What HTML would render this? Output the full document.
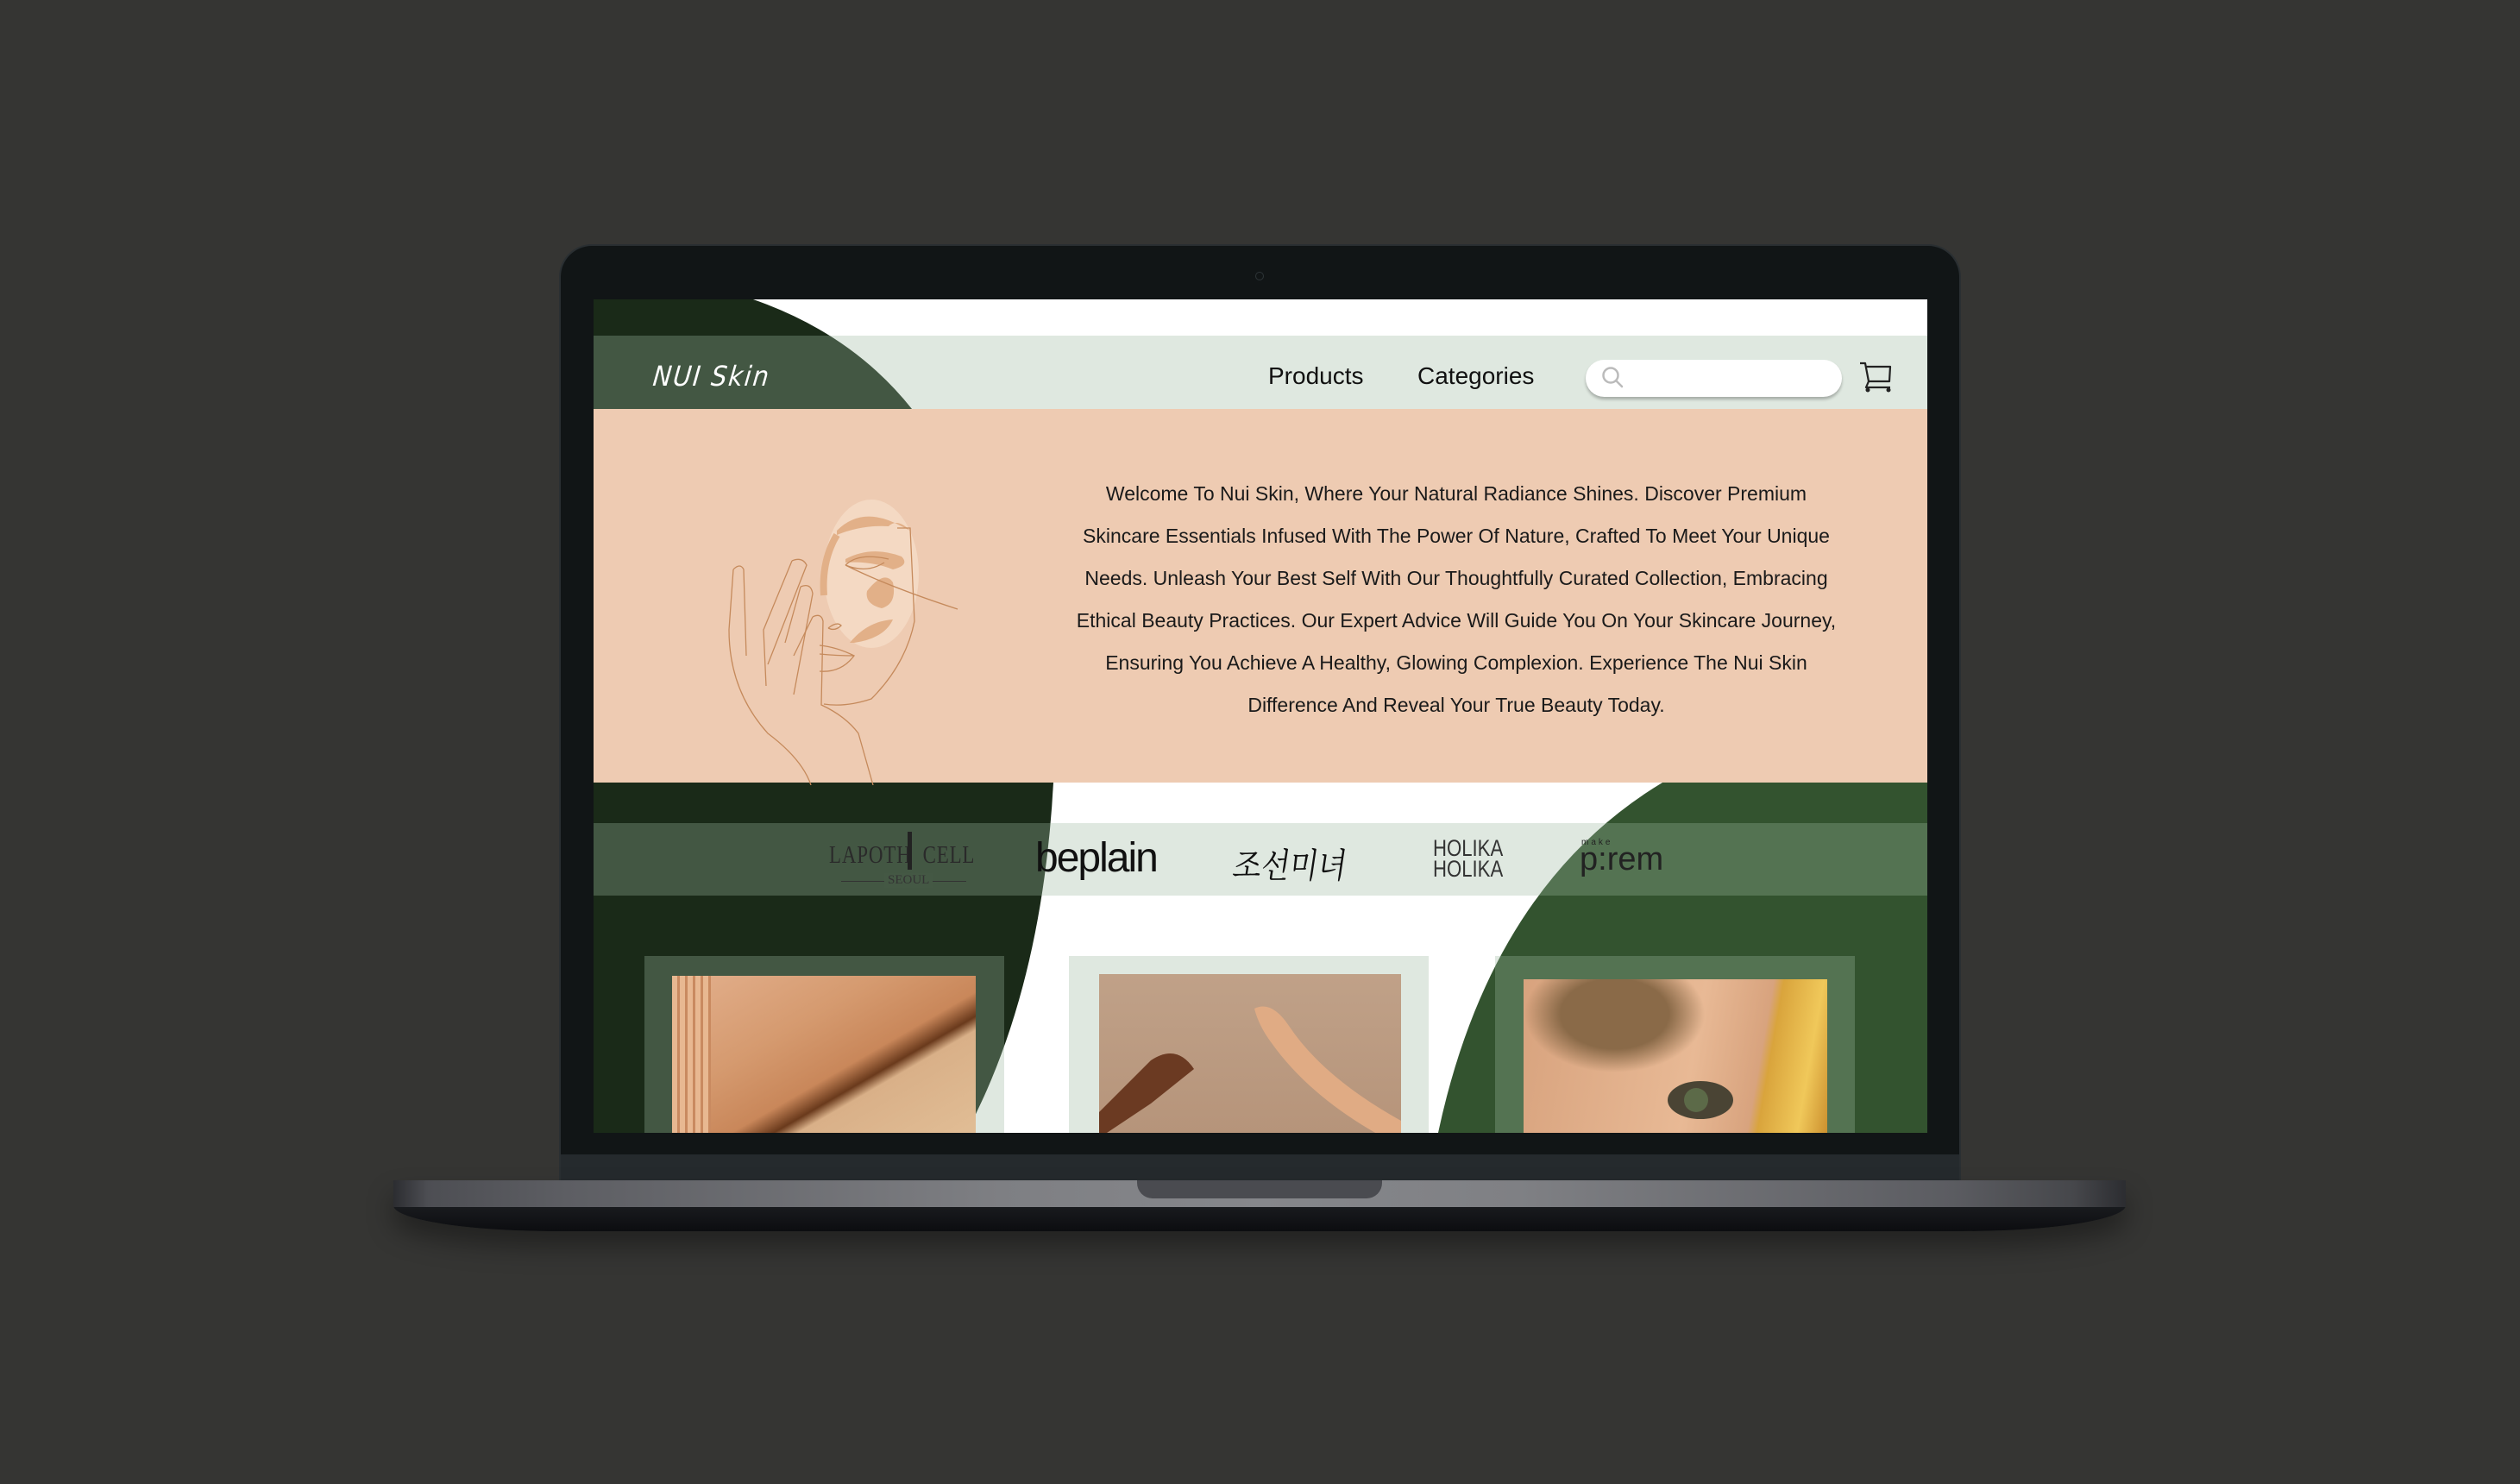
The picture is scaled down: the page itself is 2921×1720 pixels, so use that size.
<!DOCTYPE html>
<html><head><meta charset="utf-8"><style>
*{margin:0;padding:0;box-sizing:border-box}
body{width:2921px;height:1720px;background:#353533;position:relative;overflow:hidden;font-family:"Liberation Sans",sans-serif}
.abs{position:absolute}
</style></head><body>
<div class="abs" style="left:648px;top:283px;width:1625px;height:1100px;background:#111516;border-radius:38px 38px 0 0;border:2px solid #2a2f32;border-bottom:none"></div>
<div class="abs" style="left:650px;top:1338px;width:1621px;height:32px;background:#252a2d"></div>
<div class="abs" style="left:1455px;top:315px;width:10px;height:10px;border-radius:50%;border:1.5px solid #2e3538"></div>
<div class="abs" style="left:456px;top:1368px;width:2008px;height:59px;border-radius:0 0 190px 190px / 0 0 30px 30px;background:linear-gradient(#27292d,#0c0d10);box-shadow:0 18px 30px rgba(0,0,0,.35)"></div>
<div class="abs" style="left:456px;top:1368px;width:2008px;height:31px;background:linear-gradient(90deg,#2c2d31 0%,#4d4e53 2%,#5d5e63 10%,#7e7f83 35%,#86878b 50%,#7f8084 65%,#5b5c61 90%,#46474b 97%,#2c2d31 100%)"></div>
<div class="abs" style="left:1318px;top:1368px;width:284px;height:21px;background:#4a4b50;border-radius:0 0 18px 18px"></div>

<div class="abs" style="left:688px;top:347px;width:1546px;height:966px;overflow:hidden;background:#fff">
<svg class="abs" style="left:0;top:0" width="1546" height="966" viewBox="0 0 1546 966">
<path d="M0 0 L185 0 Q300 40 369 127 L0 127 Z" fill="#1a2a18"/>
<rect x="0" y="42" width="1546" height="85" fill="rgba(156,184,160,0.323)"/>
<rect x="0" y="127" width="1546" height="433" fill="#eecbb2"/>
<path d="M0 560 L533 560 Q520 800 432 966 L0 966 Z" fill="#1a2a18"/>
<path d="M1239 560 L1546 560 L1546 966 L979 966 Q1040 680 1239 560 Z" fill="#33532f"/>
<rect x="0" y="607" width="1546" height="84" fill="rgba(156,184,160,0.323)"/>
<rect x="59" y="761" width="417" height="230" fill="rgba(156,184,160,0.323)"/>
<rect x="551" y="761" width="417" height="230" fill="rgba(156,184,160,0.323)"/>
<rect x="1045" y="761" width="417" height="230" fill="rgba(156,184,160,0.323)"/>
</svg>
<div class="abs" style="left:69px;top:70px;color:#fff;font:italic 32px 'DejaVu Sans',sans-serif;letter-spacing:2px;transform:skewX(-6deg) scaleX(.9);transform-origin:left">NUI Skin</div>
<div class="abs" style="left:782px;top:73px;font-size:28px;color:#111">Products</div>
<div class="abs" style="left:955px;top:73px;font-size:28px;color:#111">Categories</div>
<div class="abs" style="left:1150px;top:70px;width:297px;height:43px;background:#fff;border-radius:22px;box-shadow:0 3px 3px rgba(0,0,0,.25)"></div>
<svg class="abs" style="left:1166px;top:76px" width="34" height="30" viewBox="0 0 34 30"><circle cx="13" cy="12" r="8.5" fill="none" stroke="#bbb" stroke-width="2.5"/><path d="M19 18 L26 25" stroke="#bbb" stroke-width="2.5" stroke-linecap="round"/></svg>
<svg class="abs" style="left:1466px;top:72px" width="40" height="40" viewBox="0 0 40 40"><path d="M2 2 L8 2 L12 23 L36 23 L37 6 L9 6 M12 23 L9 30 L37 30" fill="none" stroke="#222" stroke-width="2.2" stroke-linejoin="round"/><circle cx="11" cy="33" r="2.5" fill="#222"/><circle cx="35" cy="33" r="2.5" fill="#222"/></svg>
<div class="abs" style="left:500px;top:201px;width:1000px;text-align:center;font-size:23px;line-height:49px;color:#1a1a1a">Welcome To Nui Skin, Where Your Natural Radiance Shines. Discover Premium<br>Skincare Essentials Infused With The Power Of Nature, Crafted To Meet Your Unique<br>Needs. Unleash Your Best Self With Our Thoughtfully Curated Collection, Embracing<br>Ethical Beauty Practices. Our Expert Advice Will Guide You On Your Skincare Journey,<br>Ensuring You Achieve A Healthy, Glowing Complexion. Experience The Nui Skin<br>Difference And Reveal Your True Beauty Today.</div>
<svg class="abs" style="left:142px;top:223px" width="300" height="340" viewBox="0 0 300 340" fill="none" stroke="#c58a5c" stroke-width="1.3">
<ellipse cx="180" cy="95" rx="55" ry="86" fill="#f4d9c3" stroke="none"/>
<path d="M140 45 Q170 15 215 40 L225 45 Q210 30 200 40 Q170 38 140 50 Z" fill="#e2b088" stroke="none"/>
<path d="M150 78 Q180 62 215 75 Q225 85 205 90 Q180 80 150 82 Z" fill="#e2b088" stroke="none"/>
<path d="M175 115 Q195 90 205 105 Q210 130 192 135 Q172 130 175 115 Z" fill="#e2b088" stroke="none"/>
<path d="M155 175 Q175 150 205 148 Q195 170 160 175 Z" fill="#e2b088" stroke="none"/>
<path d="M125 120 Q122 80 140 50" stroke="#e2b088" stroke-width="8"/>
<path d="M150 85 Q165 70 200 78 M150 85 Q175 95 195 82 M150 85 Q200 110 280 136"/>
<path d="M210 42 L225 42 L230 150 Q220 200 180 240 Q150 250 125 246"/>
<path d="M130 158 Q140 150 145 155 Q138 162 130 158"/>
<path d="M120 178 Q140 180 160 190 Q145 210 120 208 M120 188 Q140 190 160 190"/>
<path d="M20 90 Q28 82 32 90 L35 190 M20 90 L15 160 Q15 230 60 280 Q100 310 110 340"/>
<path d="M88 80 Q100 75 105 85 L60 200 M88 80 L55 160 L58 225"/>
<path d="M98 110 Q110 105 112 118 L90 235 M98 110 L80 175"/>
<path d="M112 145 Q122 140 124 150 L122 247 Q150 260 165 280 L182 340 M112 145 L90 190"/>
</svg>
<div class="abs" style="left:273px;top:629px;font:28px 'Liberation Serif',serif;color:#2a2a2a;transform:scaleX(.82);transform-origin:left;letter-spacing:1px;white-space:nowrap">LAPOTH&nbsp;&nbsp;CELL</div>
<div class="abs" style="left:364px;top:617px;width:5px;height:44px;background:#222"></div>
<div class="abs" style="left:287px;top:674px;width:145px;height:1px;background:#333"></div>
<div class="abs" style="left:337px;top:665px;font:15px 'Liberation Serif',serif;color:#333;background:#445844;padding:0 4px">SEOUL</div>
<div class="abs" style="left:512px;top:620px;font-size:48px;color:#111;letter-spacing:-2px">beplain</div>
<div class="abs" style="left:742px;top:625px;font:40px 'Noto Serif CJK SC','Noto Sans CJK KR',serif;color:#111;transform:scaleX(.85) skewX(-10deg);transform-origin:left">조선미녀</div>
<div class="abs" style="left:973px;top:624px;font-size:27px;line-height:24px;color:#333;transform:scaleX(.82);transform-origin:left">HOLIKA<br>HOLIKA</div>
<div class="abs" style="left:1145px;top:624px;font-size:10px;color:#222;letter-spacing:3px">make</div>
<div class="abs" style="left:1143px;top:628px;font-size:38px;color:#222">p:rem</div>
<div class="abs" style="left:91px;top:784px;width:352px;height:200px;background:linear-gradient(150deg,#e3b08d 0%,#d59a6f 35%,#c9875a 55%,#6a3a1c 62%,#d9b088 66%,#e2bf97 100%)"></div>
<div class="abs" style="left:91px;top:784px;width:45px;height:200px;background:repeating-linear-gradient(90deg,#e8b891 0 6px,#c98a60 6px 9px)"></div>
<div class="abs" style="left:586px;top:782px;width:350px;height:200px;background:linear-gradient(#c0a188,#b59379)"></div>
<svg class="abs" style="left:586px;top:782px" width="350" height="200"><path d="M0 160 L60 100 Q90 80 110 110 L60 150 L0 190Z" fill="#6b3a22"/><path d="M180 40 Q200 30 220 60 Q260 120 350 170 L350 200 Q250 150 200 80 Q185 60 180 40Z" fill="#e0ab84"/></svg>
<div class="abs" style="left:1078px;top:788px;width:352px;height:200px;background:radial-gradient(ellipse at 30% 20%,#8a6a48 0 18%,transparent 30%),linear-gradient(100deg,#d8a37e 0%,#e8b995 55%,#d8a37e 75%,#d9a43c 78%,#f0c85a 90%,#c88a2a 100%)"></div>
<svg class="abs" style="left:1078px;top:788px" width="352" height="200"><ellipse cx="205" cy="140" rx="38" ry="22" fill="#4a4434"/><circle cx="200" cy="140" r="14" fill="#5c6a48"/></svg>
</div>
</body></html>
